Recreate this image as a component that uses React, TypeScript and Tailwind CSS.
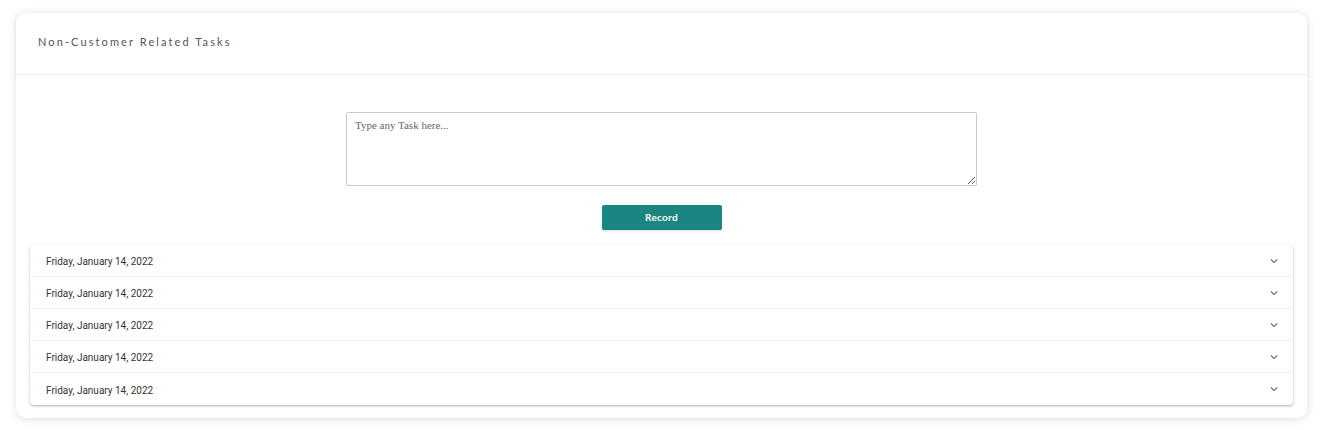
import React from "react";

const Chevron = () => (
  <svg width="14" height="14" viewBox="0 0 24 24" className="text-[#666]">
    <path d="M7.41 8.59 12 13.17l4.59-4.58L18 10l-6 6-6-6z" fill="currentColor" />
  </svg>
);

export default function App() {
  const rows = Array.from({ length: 5 });
  return (
    <div className="bg-white w-[1326px] h-[430px] pt-[13px] pl-[16px]">
      <div className="w-[1291px] h-[405px] bg-white rounded-[10px] shadow-[0_1px_8px_rgba(0,0,0,0.13)] flex flex-col">
        <div className="h-[62px] flex items-center pl-[22px] shadow-[0_2px_4px_rgba(0,0,0,0.04)] border-b border-[#f1f1f1]">
          <span className="text-[11px] tracking-[2.1px] text-[#555] font-['Lato',sans-serif] mt-[-2px]">
            Non-Customer Related Tasks
          </span>
        </div>
        <div className="flex flex-col items-center pt-[37px]">
          <textarea
            placeholder="Type any Task here..."
            className="w-[631px] h-[74px] border border-[#c8c8c8] rounded-[2px] px-[8px] py-[4px] text-[11px] font-['Liberation_Serif',serif] placeholder:text-[#666] text-[#333] resize-y outline-none"
          />
          <button className="mt-[19px] w-[120px] h-[25px] bg-[#1b8582] rounded-[2px] text-white text-[10px] font-bold font-['Lato',sans-serif] tracking-[0.3px] shadow-[0_1px_2px_rgba(0,0,0,0.15)]">
            Record
          </button>
        </div>
        <div className="mx-[14px] mt-[15px] rounded-[4px] bg-white shadow-[0_1px_3px_rgba(0,0,0,0.25),0_1px_1px_rgba(0,0,0,0.08)]">
          {rows.map((_, i) => (
            <div
              key={i}
              className={`h-[32px] flex items-center justify-between pl-[16px] pr-[12px] ${i < 4 ? "border-b border-[#f0f0f0]" : ""}`}
            >
              <span className="text-[10px] text-[#333] font-['Roboto',sans-serif] pt-[2px]">Friday, January 14, 2022</span>
              <Chevron />
            </div>
          ))}
        </div>
      </div>
    </div>
  );
}
